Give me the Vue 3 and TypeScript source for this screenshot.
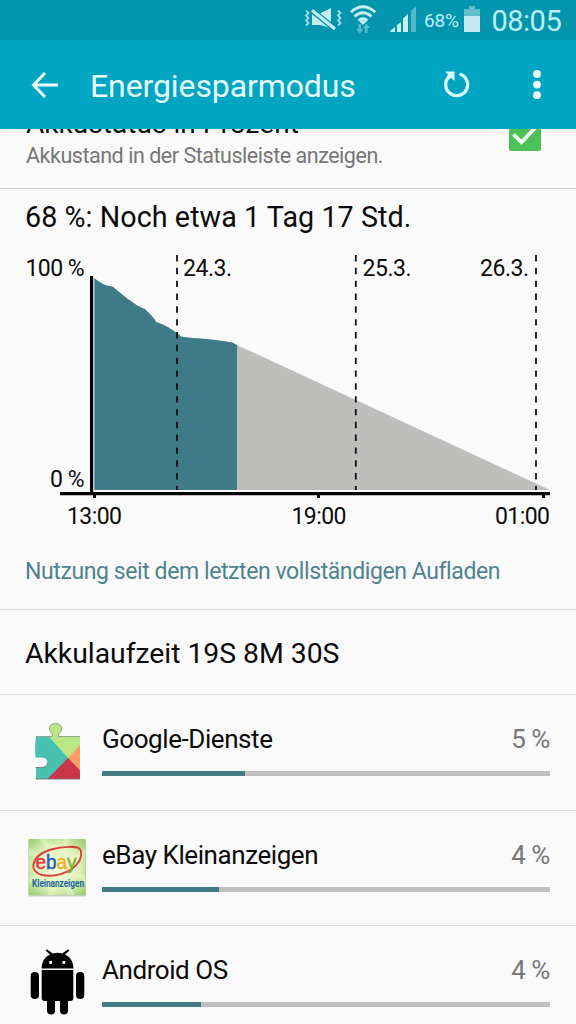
<script setup lang="ts">
interface Usage {
  id: 'play' | 'ebay' | 'android'
  name: string
  percent: string
  fill: number
}

const usages: Usage[] = [
  { id: 'play', name: 'Google-Dienste', percent: '5 %', fill: 32 },
  { id: 'ebay', name: 'eBay Kleinanzeigen', percent: '4 %', fill: 26.1 },
  { id: 'android', name: 'Android OS', percent: '4 %', fill: 22 },
]

const dayLines: number[] = [177, 355.8, 536]
const ticks: number[] = [93, 317, 542]
</script>

<template>
  <div class="screen">
    <header class="status">
      <svg class="i-mute" width="38" height="26" viewBox="0 0 38 26">
        <g fill="none" stroke="#b4e6ec" stroke-width="1.700">
          <path d="M2 2.500l2.500 2.500-2.500 2.500 2.500 2.500-2.500 2.500 2.500 2.500-2.500 2.500" />
          <path d="M34 2.500l2.500 2.500-2.500 2.500 2.500 2.500-2.500 2.500 2.500 2.500-2.500 2.500" />
        </g>
        <path d="M8 5.500h8L27 0v20L16 17H8z" fill="#c5eef2" />
        <path d="M5 0l26 21" stroke="#0394ae" stroke-width="5.600" />
        <path d="M8 2.200L31 21" stroke="#c5eef2" stroke-width="3.200" />
      </svg>
      <svg class="i-wifi" width="28" height="30" viewBox="0 0 28 30">
        <g fill="none" stroke="#c5f1f4" stroke-width="2.800">
          <path d="M1.800 7.300Q14-3.700 26.200 7.300" />
          <path d="M5.500 11.500Q14 4 22.500 11.500" />
          <path d="M9.500 15.500Q14 12 18.500 15.500" />
        </g>
        <path d="M10.500 16.500Q14 14 17.500 16.500L14 20z" fill="#c5f1f4" />
        <path d="M9.500 19v5H7l3.800 4.500L14.500 24H12v-5zM16 28v-5h-2l3.500-4.500L21 23h-2.500v5z" fill="#55bccb" />
      </svg>
      <svg class="i-signal" width="27" height="26" viewBox="0 0 27 26">
        <path d="M0 26v-1l5-4v5zM7 26v-7l4-3v10z" fill="#c5f1f4" />
        <path d="M13 26V12.500l5-4.500v18z" fill="#c5f1f4" />
        <path d="M21 26V5l5-5v26z" fill="#55b9c9" />
      </svg>
      <span class="charge">68%</span>
      <svg class="i-batt" width="16" height="26" viewBox="0 0 16 26">
        <path d="M0 3h5V0h6v3h5v8H0z" fill="#63bdca" />
        <path d="M0 10h16v16H0z" fill="#c3e9ee" />
      </svg>
      <span class="clock">08:05</span>
    </header>

    <nav class="bar">
      <svg class="i-back" width="28" height="28" viewBox="0 0 28 28">
        <path d="M27 14H3M14 2L2.500 14 14 26" fill="none" stroke="#e9ffff" stroke-width="3" />
      </svg>
      <h1>Energiesparmodus</h1>
      <svg class="i-reload" width="28" height="28" viewBox="0 0 28 28">
        <path d="M16.500 3A11 11 0 1 1 6.200 5.500" fill="none" stroke="#d9fcff" stroke-width="3.300" />
        <path d="M2 .5h9.500V10L8.200 6.800 6 8.500 4 5.500 5 3.500z" fill="#d9fcff" />
      </svg>
      <svg class="i-more" width="10" height="30" viewBox="0 0 10 30">
        <circle cx="5" cy="4" r="3.900" fill="#e9ffff" />
        <circle cx="5" cy="14.600" r="3.900" fill="#e9ffff" />
        <circle cx="5" cy="25.200" r="3.900" fill="#e9ffff" />
      </svg>
    </nav>

    <section class="setting">
      <div class="setting-text">
        <div class="setting-title">Akkustatus in Prozent</div>
        <div class="setting-sub">Akkustand in der Statusleiste anzeigen.</div>
      </div>
      <svg class="check" width="32" height="32" viewBox="0 0 32 32">
        <rect width="32" height="32" rx="2.500" fill="#4cc159" />
        <path d="M4.500 15.500l8 7.800L26 9" fill="none" stroke="#f4fff0" stroke-width="3.800" />
      </svg>
    </section>

    <section class="battery">
      <h2>68 %: Noch etwa 1 Tag 17 Std.</h2>
      <svg class="chart" width="576" height="295" viewBox="0 240 576 295">
        <path d="M92.500 276H94l4 4.500 7 4.500 8 1.800 5 4.200 10 8 10 7 7 3 6 6 4 6 6 2 6 3 9 6 4 4 9 1 15 1 17 2 12 2 3 1.500V491.500H92.500z" fill="#fff" />
        <path d="M237 345L549 489.500V490H237z" fill="#bebebd" />
        <path d="M94.300 490V278l3.700 3 7 4 8 1.800 5 4.200 10 8 10 7 7 3 6 6 4.500 5.500.5 1.500 6 2 6 3 9 6 4 3.500 9 1.200 15 1 17 2 10.500 1.800 4.500 2.500V490z" fill="#3e7a87" />
        <path d="M90 276h3.200v216H550v3.200H60V492h30z" fill="#000" />
        <rect v-for="t in ticks" :key="t" :x="t" y="494" width="3" height="4" fill="#000" />
        <line v-for="x in dayLines" :key="x" :x1="x" :x2="x" y1="255" y2="490" stroke="#111" stroke-width="1.800" stroke-dasharray="6.4 6.43" />
        <g class="axis">
          <text x="25.500" y="276" textLength="59">100 %</text>
          <text x="50" y="487" textLength="34.500">0 %</text>
          <text x="183" y="276" textLength="49">24.3.</text>
          <text x="362.500" y="276" textLength="49">25.3.</text>
          <text x="480" y="276" textLength="49">26.3.</text>
          <text x="67" y="523.500" textLength="55">13:00</text>
          <text x="291.500" y="523.500" textLength="55">19:00</text>
          <text x="495" y="523.500" textLength="55">01:00</text>
        </g>
      </svg>
      <p class="since">Nutzung seit dem letzten vollständigen Aufladen</p>
    </section>

    <section class="runtime">Akkulaufzeit 19S 8M 30S</section>

    <section v-for="u in usages" :key="u.id" class="usage">
      <svg v-if="u.id === 'play'" class="app" width="60" height="60" viewBox="0 0 60 60">
        <defs>
          <clipPath id="piece">
            <path d="M8.500 15.500H25V13q-3-2-3-5 0-5.500 6-5.500T34 8q0 3-3 5v2.500h21.500V58H8.500V46.500H13q7 0 7-5t-7-5H8q-1-10 .5-21z" />
          </clipPath>
        </defs>
        <g transform="translate(.5 0)">
          <g clip-path="url(#piece)">
            <path d="M0 0h60v60H0z" fill="#49c1b0" />
            <path d="M18 0h42v26L40.500 37 20 14z" fill="#b9e786" />
            <path d="M52.500 24V50L40.500 37z" fill="#ff9c68" />
            <path d="M20 58l20.500-21L53 50v8z" fill="#cb3549" />
          </g>
          <path d="M8.500 15.500H25V13q-3-2-3-5 0-5.500 6-5.500T34 8q0 3-3 5v2.500h21.500" fill="none" stroke="#8c9784" stroke-width=".8" />
          <path d="M8 46.500h5q7 0 7-5M8 58h44.500" fill="none" stroke="#64706a" stroke-width=".8" />
        </g>
      </svg>

      <svg v-else-if="u.id === 'ebay'" class="app" width="60" height="60" viewBox="0 0 60 60">
        <defs>
          <radialGradient id="glow" r=".7">
            <stop offset="0" stop-color="#fafde6" />
            <stop offset=".55" stop-color="#e0f1bd" />
            <stop offset="1" stop-color="#96cb6d" />
          </radialGradient>
        </defs>
        <rect x="1.500" y="3" width="57.500" height="56.500" rx="1" fill="#c7ccc1" />
        <rect x="1.500" y="2" width="57" height="56" rx="1" fill="url(#glow)" />
        <path d="M30 28L2 10v8zM30 28L12 2h7zM30 28L37 2h7zM30 28L58 12v8zM30 28L2 40v7zM30 28L58 38v8zM30 28L20 58h8zM30 28L41 58h7z" fill="#edf8c0" opacity=".45" />
        <path d="M42 10Q52 8.500 54 14 56 24 44 32.500 30 41 15 38 5 35 6.500 27 9 17 24 12.500 38 8.500 49 10.500" fill="none" stroke="#d9403c" stroke-width="1.900" />
        <text x="8.500" y="32" textLength="41" lengthAdjust="spacingAndGlyphs" class="logo"><tspan fill="#e53941" stroke="#e53941">e</tspan><tspan fill="#245dbb" stroke="#245dbb">b</tspan><tspan fill="#edb31c" stroke="#edb31c">a</tspan><tspan fill="#80ae2e" stroke="#80ae2e">y</tspan></text>
        <text x="5" y="50" textLength="52" lengthAdjust="spacingAndGlyphs" class="logo-sub">Kleinanzeigen</text>
      </svg>

      <svg v-else class="app droid" width="60" height="66" viewBox="0 0 60 66">
        <path d="M14.500 19.500Q15 9 23 5.500L18.500 1.500 20 .3 25.800 4.500q4.700-1.500 9.400 0L41 .3l1.500 1.200L38 5.500q8 3.500 8.500 14z" />
        <path d="M14.700 21h31.600v28q0 3-3 3H41v9.500q0 4-4 4t-4-4V52h-5v9.500q0 4-4 4t-4-4V52h-2.300q-3 0-3-3z" />
        <rect x="3.700" y="23" width="8.300" height="27" rx="4.100" />
        <rect x="49" y="23" width="8.300" height="27" rx="4.100" />
        <rect x="22.300" y="12" width="2.800" height="2.800" fill="#fff" />
        <rect x="35.500" y="12" width="2.800" height="2.800" fill="#fff" />
      </svg>

      <div class="usage-body">
        <div class="usage-line">
          <span class="usage-name">{{ u.name }}</span>
          <span class="usage-percent">{{ u.percent }}</span>
        </div>
        <div class="track"><div class="fill" :style="{ width: u.fill + '%' }"></div></div>
      </div>
    </section>
  </div>
</template>

<style>
body { margin: 0; overflow: hidden; background: #fafafa; }
</style>

<style scoped>
.screen { width: 576px; height: 1024px; overflow: hidden; background: #fafafa; font-family: Roboto, "Liberation Sans", sans-serif; color: #0b0b0b; }
.screen * { box-sizing: border-box; }
svg { display: block; flex: none; }
h1, h2, p { margin: 0; font-weight: 400; white-space: nowrap; }
.status { display: flex; align-items: flex-start; height: 40px; padding-left: 304px; background: #0394ae; color: #baf0f6; }
.i-mute { margin-top: 8px; }
.i-wifi { margin: 5px 0 0 7px; }
.i-signal { margin: 6px 0 0 13px; }
.charge { width: 40px; margin: 9px 0 0 7px; font-size: 19px; line-height: 24px; letter-spacing: -.2px; }
.i-batt { margin: 6px 0 0; }
.clock { margin: 4px 0 0 11.500px; font-size: 29px; line-height: 34px; letter-spacing: -.5px; }
.bar { display: flex; align-items: center; height: 89px; padding: 0 34px 0 31px; background: #00a5c2; position: relative; z-index: 1; }
h1 { margin: 2px 0 0 31px; width: 353px; font-size: 32px; line-height: 40px; letter-spacing: -.1px; color: #e4feff; }
.i-more { margin-left: 61px; }
.setting { display: flex; justify-content: space-between; height: 60px; padding: 0 35px 0 26px; border-bottom: 1px solid #d2d2d2; }
.setting-title { margin-top: -21px; font-size: 28px; line-height: 32px; letter-spacing: .05px; }
.setting-sub { margin-top: 3px; font-size: 21.500px; line-height: 26px; letter-spacing: -.47px; color: #767676; }
.check { margin-top: -10.500px; }
.battery { height: 421px; border-bottom: 1px solid #d8d8d8; overflow: hidden; }
h2 { height: 51px; padding: 10px 0 0 25px; font-size: 28.700px; line-height: 36px; letter-spacing: .06px; }
.axis { font-size: 23px; fill: #0b0b0b; }
.since { padding: 22px 0 0 25px; font-size: 23px; line-height: 30px; letter-spacing: -.41px; color: #4e838e; }
.runtime { height: 85px; padding: 25px 0 0 25px; font-size: 28.400px; line-height: 38px; letter-spacing: -.04px; border-bottom: 1px solid #dcdcdc; white-space: nowrap; }
.usage { display: flex; height: 115.500px; padding: 26px 26px 0 27px; border-bottom: 1px solid #dcdcdc; }
.usage-body { flex: 1; margin-left: 15px; }
.usage-line { display: flex; justify-content: space-between; margin-top: 1px; font-size: 26px; line-height: 34px; letter-spacing: -.43px; white-space: nowrap; }
.usage-percent { color: #777; }
.track { height: 5px; margin-top: 15px; background: #c0c0bf; }
.fill { height: 100%; background: #427b85; }
.logo { font-family: "Liberation Sans", Arial, sans-serif; font-size: 20px; stroke-width: .5px; }
.logo-sub { font-size: 10px; font-weight: 700; fill: #19679d; }
.app { overflow: visible; }
.droid { margin-top: -3px; }
</style>
